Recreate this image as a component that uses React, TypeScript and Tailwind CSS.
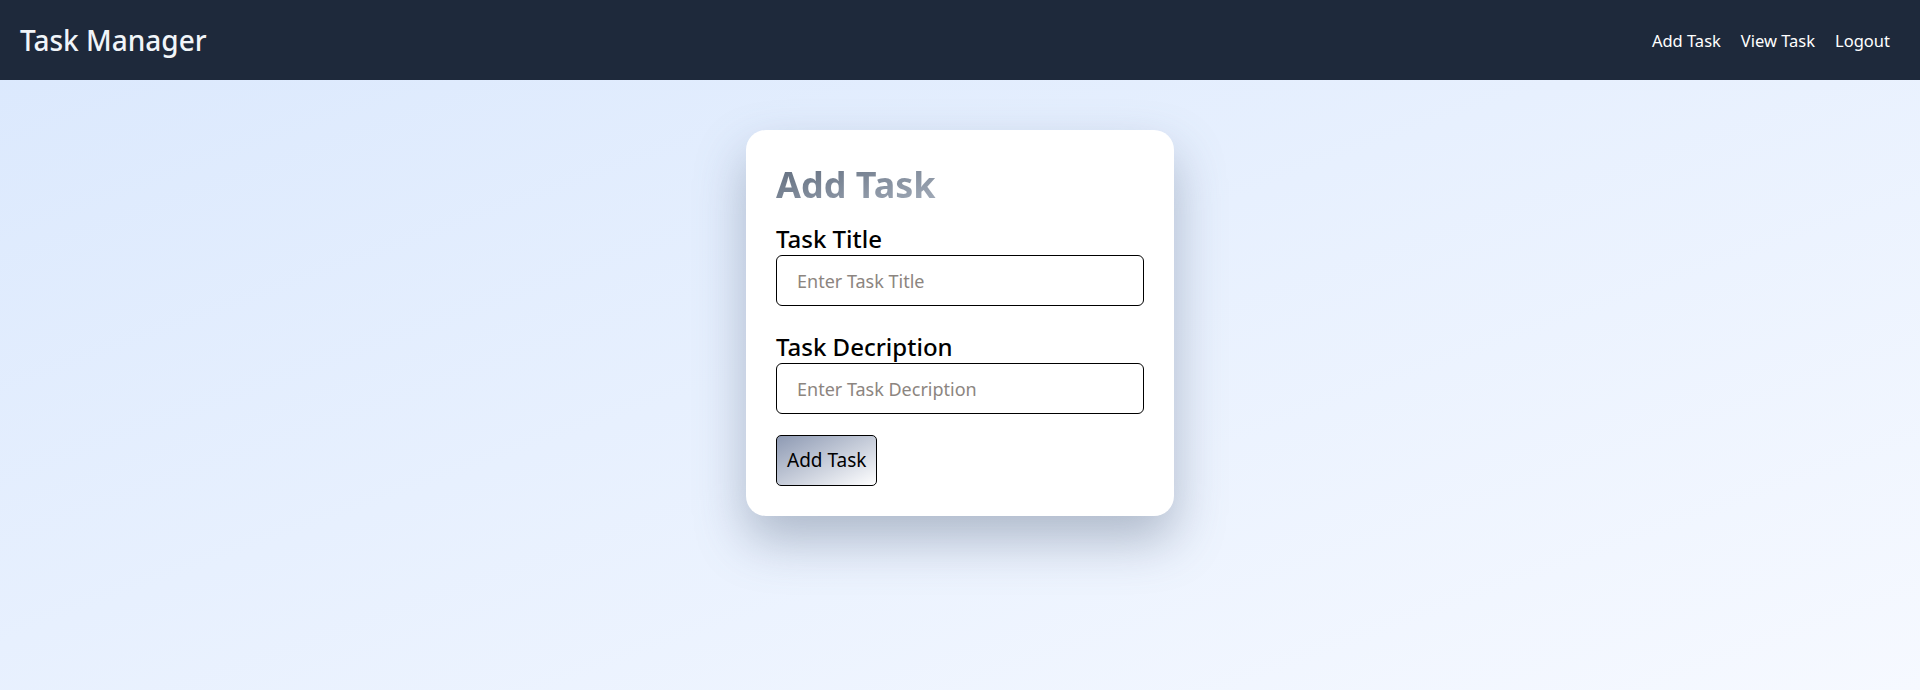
export default function App() {
  return (
    <div
      className="min-h-screen flex flex-col bg-gradient-to-br from-[#dae8fd] to-[#f6f9ff]"
      style={{ fontFamily: '"Noto Sans", "Open Sans", sans-serif' }}
    >
      <nav className="h-[80px] bg-[#1e293b] flex items-center justify-between px-[20px] pr-[30px]">
        <span className="text-[28px] text-[#f1f5f9] font-medium">Task Manager</span>
        <div className="flex gap-[20px] text-[16.5px] text-white pt-[2px]">
          <a href="#">Add Task</a>
          <a href="#">View Task</a>
          <a href="#">Logout</a>
        </div>
      </nav>

      <main className="flex-1 flex justify-center pt-[50px]">
        <div className="w-[428px] h-fit bg-white rounded-[20px] px-[30px] pt-[32px] pb-[30px] shadow-[0_24px_50px_rgba(100,116,139,0.45)]">
          <h1 className="text-[36px] leading-[46px] font-bold bg-gradient-to-br from-[#5f6b7c] to-[#a7b0bd] bg-clip-text text-transparent w-fit">
            Add Task
          </h1>

          <form className="mt-[16px]" onSubmit={(e) => e.preventDefault()}>
            <label className="block text-[24px] leading-[30px] font-medium text-black">Task Title</label>
            <input
              className="mt-[1px] w-full h-[51px] border border-black rounded-[6px] px-[20px] text-[18px] placeholder:text-[#8c8580] outline-none"
              placeholder="Enter Task Title"
            />

            <label className="block mt-[26px] text-[24px] leading-[30px] font-medium text-black">Task Decription</label>
            <input
              className="mt-[1px] w-full h-[51px] border border-black rounded-[6px] px-[20px] text-[18px] placeholder:text-[#8c8580] outline-none"
              placeholder="Enter Task Decription"
            />

            <button
              type="submit"
              className="mt-[21px] h-[51px] px-[10px] border border-black rounded-[5px] text-[19px] text-black bg-gradient-to-br from-[#8e9ab3] to-white"
            >
              Add Task
            </button>
          </form>
        </div>
      </main>
    </div>
  )
}
